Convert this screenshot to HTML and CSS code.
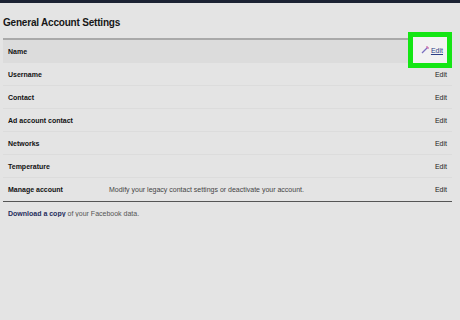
FILE: index.html
```html
<!DOCTYPE html>
<html>
  <head>
    <meta charset="UTF-8" />
    <title>General Account Settings</title>
    <link rel="stylesheet" href="styles.css">
  </head>
  <body>
    <div class="top-bar"></div>
    <div class="page">
      <h1 class="page-title">General Account Settings</h1>
      <div class="settings">
        <div class="row row-active">
          <span class="label">Name</span>
          <span class="desc"></span>
          <span class="edit edit-hidden">Edit</span>
        </div>
        <div class="row">
          <span class="label">Username</span>
          <span class="desc"></span>
          <span class="edit">Edit</span>
        </div>
        <div class="row">
          <span class="label">Contact</span>
          <span class="desc"></span>
          <span class="edit">Edit</span>
        </div>
        <div class="row">
          <span class="label">Ad account contact</span>
          <span class="desc"></span>
          <span class="edit">Edit</span>
        </div>
        <div class="row">
          <span class="label">Networks</span>
          <span class="desc"></span>
          <span class="edit">Edit</span>
        </div>
        <div class="row">
          <span class="label">Temperature</span>
          <span class="desc"></span>
          <span class="edit">Edit</span>
        </div>
        <div class="row">
          <span class="label">Manage account</span>
          <span class="desc">Modify your legacy contact settings or deactivate your account.</span>
          <span class="edit">Edit</span>
        </div>
      </div>
      <p class="download"><a class="download-link">Download a copy</a> of your Facebook data.</p>

      <!-- highlight box over the first Edit -->
      <div class="highlight">
        <div class="highlight-inner">
          <svg class="cursor" width="8" height="8" viewBox="0 0 8 8">
            <path d="M1 7 L6 2" stroke="#7a6fc0" stroke-width="1.2" fill="none"/>
            <path d="M5 1 L7 1 L7 3" stroke="#c050a0" stroke-width="1" fill="none"/>
          </svg>
          <span class="edit-link">Edit</span>
        </div>
      </div>
    </div>
  </body>
</html>
```

FILE: styles.css
```css
body {
  margin: 0;
  background: #e4e4e4;
  font-family: "Liberation Sans", Arial, sans-serif;
  color: #1a1a1a;
}

.top-bar {
  height: 3px;
  background: #1c2233;
}

.page {
  position: relative;
  padding: 0 8px 0 3px;
}

.page-title {
  font-size: 10px;
  font-weight: bold;
  letter-spacing: -0.2px;
  margin: 0;
  padding: 14px 0 10px 0;
  color: #161616;
}

.settings {
  border-top: 2px solid #a9a9a9;
  border-bottom: 1px solid #555;
}

.row {
  display: flex;
  align-items: center;
  height: 23px;
  padding: 0 5px;
  box-sizing: border-box;
  border-bottom: 1px solid #dcdcdc;
  font-size: 7px;
}

.row:last-child {
  border-bottom: none;
}

.row-active {
  background: #dcdcdc;
}

.label {
  width: 101px;
  flex-shrink: 0;
  font-weight: bold;
  color: #111;
}

.desc {
  flex: 1;
  color: #444;
}

.edit {
  color: #222;
}

.edit-hidden {
  visibility: hidden;
}

.download {
  margin: 0;
  padding: 8px 0 0 5px;
  font-size: 7px;
  color: #555;
}

.download-link {
  font-weight: bold;
  color: #1f2d5c;
}

.highlight {
  position: absolute;
  left: 408px;
  top: 29px;
  width: 44px;
  height: 36px;
  box-sizing: border-box;
  border: 5px solid #14e614;
}

.highlight-inner {
  height: 100%;
  background: #f2f2f2;
  display: flex;
  align-items: center;
  justify-content: flex-end;
  gap: 2px;
  padding-right: 4px;
  font-size: 7px;
}

.edit-link {
  color: #2d3f86;
  text-decoration: underline;
}
```
